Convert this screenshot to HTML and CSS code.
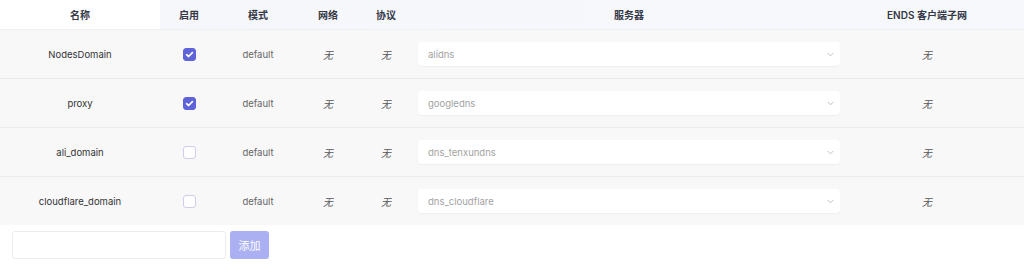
FILE: index.html
```html
<!DOCTYPE html>
<html lang="zh">
<head>
<meta charset="utf-8">
<link rel="stylesheet" href="styles.css">
</head>
<body>
<div class="table">
  <div class="row head">
    <div class="cell c-name">名称</div>
    <div class="cell">启用</div>
    <div class="cell">模式</div>
    <div class="cell">网络</div>
    <div class="cell">协议</div>
    <div class="cell">服务器</div>
    <div class="cell">ENDS 客户端子网</div>
    <div class="cell"></div>
  </div>
  <div class="row body">
    <div class="cell name">NodesDomain</div>
    <div class="cell"><span class="check on"><svg viewBox="0 0 13 13" width="13" height="13"><path d="M3.6 6.7 L5.6 8.5 L9.4 4.6" fill="none" stroke="#fff" stroke-width="1.7" stroke-linecap="round" stroke-linejoin="round"/></svg></span></div>
    <div class="cell mode">default</div>
    <div class="cell none">无</div>
    <div class="cell none">无</div>
    <div class="cell srv"><div class="select"><span>alidns</span><svg class="chev" viewBox="0 0 8 5" width="7" height="5"><path d="M0.8 0.8 L4 4 L7.2 0.8" fill="none" stroke="#b0b0b0" stroke-width="0.9"/></svg></div></div>
    <div class="cell none">无</div>
    <div class="cell"></div>
  </div>
  <div class="row body">
    <div class="cell name">proxy</div>
    <div class="cell"><span class="check on"><svg viewBox="0 0 13 13" width="13" height="13"><path d="M3.6 6.7 L5.6 8.5 L9.4 4.6" fill="none" stroke="#fff" stroke-width="1.7" stroke-linecap="round" stroke-linejoin="round"/></svg></span></div>
    <div class="cell mode">default</div>
    <div class="cell none">无</div>
    <div class="cell none">无</div>
    <div class="cell srv"><div class="select"><span>googledns</span><svg class="chev" viewBox="0 0 8 5" width="7" height="5"><path d="M0.8 0.8 L4 4 L7.2 0.8" fill="none" stroke="#b0b0b0" stroke-width="0.9"/></svg></div></div>
    <div class="cell none">无</div>
    <div class="cell"></div>
  </div>
  <div class="row body">
    <div class="cell name">ali_domain</div>
    <div class="cell"><span class="check"></span></div>
    <div class="cell mode">default</div>
    <div class="cell none">无</div>
    <div class="cell none">无</div>
    <div class="cell srv"><div class="select"><span>dns_tenxundns</span><svg class="chev" viewBox="0 0 8 5" width="7" height="5"><path d="M0.8 0.8 L4 4 L7.2 0.8" fill="none" stroke="#b0b0b0" stroke-width="0.9"/></svg></div></div>
    <div class="cell none">无</div>
    <div class="cell"></div>
  </div>
  <div class="row body last">
    <div class="cell name">cloudflare_domain</div>
    <div class="cell"><span class="check"></span></div>
    <div class="cell mode">default</div>
    <div class="cell none">无</div>
    <div class="cell none">无</div>
    <div class="cell srv"><div class="select"><span>dns_cloudflare</span><svg class="chev" viewBox="0 0 8 5" width="7" height="5"><path d="M0.8 0.8 L4 4 L7.2 0.8" fill="none" stroke="#b0b0b0" stroke-width="0.9"/></svg></div></div>
    <div class="cell none">无</div>
    <div class="cell"></div>
  </div>
</div>
<div class="add">
  <div class="input"></div>
  <div class="btn">添加</div>
</div>
</body>
</html>
```
FILE: styles.css
```css
html, body {
  margin: 0;
  padding: 0;
  background: #ffffff;
}
body {
  font-family: Inter, "Noto Sans CJK SC", sans-serif;
  font-size: 9.5px;
  color: #333;
  width: 1024px;
  height: 272px;
  overflow: hidden;
}
.row {
  display: grid;
  grid-template-columns: 160px 58px 80px 60px 56px 430px 166px 14px;
}
.cell {
  display: flex;
  align-items: center;
  justify-content: center;
}
.head {
  height: 29px;
  border-bottom: 1px solid #eef0f4;
  background: linear-gradient(to right, #ffffff 0, #ffffff 160px, #f5f7fb 160px, #f6f8fc 100%);
  font-weight: 600;
  font-size: 10px;
  color: #353846;
}
.head .c-name {
  background: #ffffff;
}
.body {
  height: 48px;
  background: #f8f8f9;
  border-bottom: 1px solid #ebebee;
}
.body.last {
  border-bottom: none;
  height: 48px;
}
.name {
  color: #333;
}
.mode {
  color: #666;
}
.none {
  color: #555;
  font-style: italic;
  font-size: 10px;
  font-weight: 400;
  font-family: "Noto Sans CJK SC", sans-serif;
}
.check {
  width: 13px;
  height: 13px;
  box-sizing: border-box;
  border-radius: 3px;
  border: 1px solid #cfcde8;
  background: #ffffff;
  display: flex;
}
.check.on {
  background: #5e63da;
  border-color: #5e63da;
}
.check svg {
  margin: -1px;
}
.srv {
  justify-content: stretch;
  padding: 0 4px;
}
.select {
  flex: 1;
  height: 24px;
  background: #ffffff;
  border-radius: 4px;
  box-shadow: 0 1px 1px rgba(0,0,0,0.04);
  display: flex;
  align-items: center;
  justify-content: space-between;
  padding: 0 6px 0 10px;
  color: #a2a2a2;
  font-size: 9.5px;
}
.add {
  display: flex;
  gap: 4px;
  padding: 6px 0 0 12px;
}
.input {
  width: 212px;
  height: 26px;
  border: 1px solid #ededf0;
  border-radius: 3px;
  background: #fff;
}
.btn {
  width: 39px;
  height: 28px;
  border-radius: 3px;
  background: #aab0f1;
  color: #ffffff;
  display: flex;
  align-items: center;
  justify-content: center;
  font-size: 11px;
  font-family: "Noto Sans CJK SC", sans-serif;
}
```
